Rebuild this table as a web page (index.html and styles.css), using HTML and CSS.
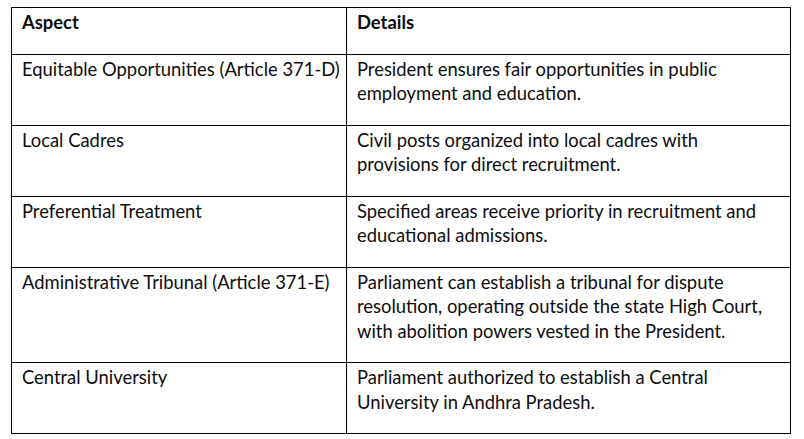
FILE: index.html
```html
<!DOCTYPE html>
<html>
<head>
<meta charset="utf-8">
<link rel="stylesheet" href="styles.css">
</head>
<body>
<table class="grid">
  <colgroup><col class="c1"><col class="c2"></colgroup>
  <tr class="head"><th>Aspect</th><th>Details</th></tr>
  <tr><td>Equitable Opportunities (Article 371-D)</td><td>President ensures fair opportunities in public<br>employment and education.</td></tr>
  <tr><td>Local Cadres</td><td>Civil posts organized into local cadres with<br>provisions for direct recruitment.</td></tr>
  <tr><td>Preferential Treatment</td><td>Specified areas receive priority in recruitment and<br>educational admissions.</td></tr>
  <tr><td>Administrative Tribunal (Article 371-E)</td><td>Parliament can establish a tribunal for dispute<br>resolution, operating outside the state High Court,<br>with abolition powers vested in the President.</td></tr>
  <tr><td>Central University</td><td>Parliament authorized to establish a Central<br>University in Andhra Pradesh.</td></tr>
</table>
</body>
</html>
```

FILE: styles.css
```css
html, body {
  margin: 0;
  padding: 0;
  background: #ffffff;
}
body {
  padding: 7px 0 0 11px;
  font-family: Lato, "Liberation Sans", sans-serif;
  color: #0d0d0d;
}
.grid {
  border-collapse: collapse;
  width: 779px;
  table-layout: fixed;
}
.c1 { width: 335px; }
.c2 { width: 444px; }
.grid th, .grid td {
  border: 1px solid #000000;
  text-align: left;
  vertical-align: top;
  font-size: 18.4px;
  line-height: 24.5px;
  padding: 2px 10px 19px 10px;
  white-space: nowrap;
}
.grid th {
  font-weight: 700;
}
.grid td {
  font-weight: 400;
}
```
